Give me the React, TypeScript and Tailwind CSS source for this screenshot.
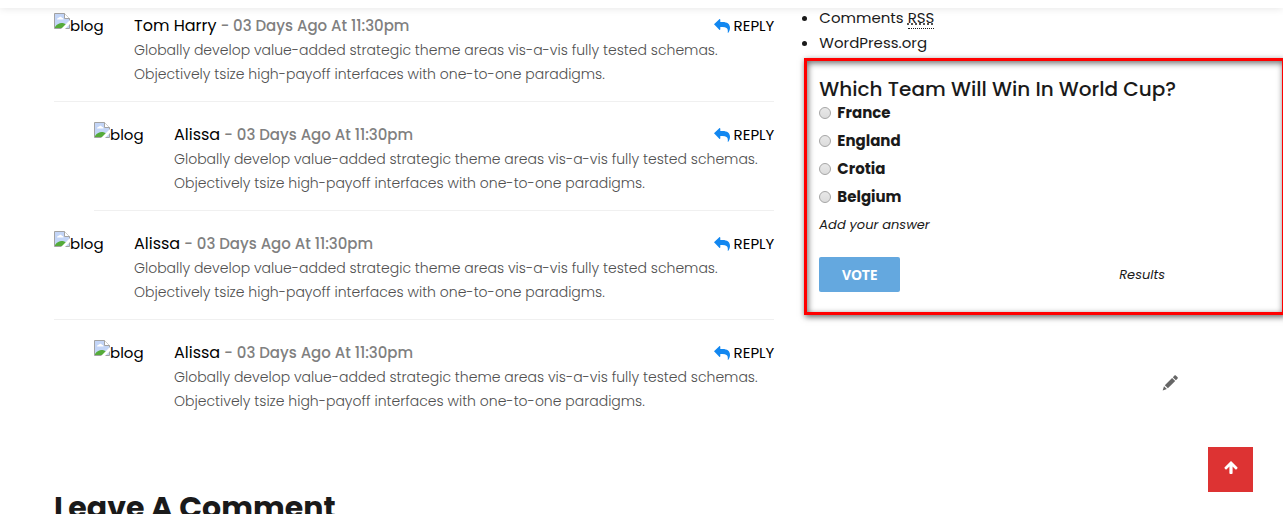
import React from 'react';

const comments = [
    {id: 1, name: 'Tom Harry', nested: false},
    {id: 2, name: 'Alissa', nested: true},
    {id: 3, name: 'Alissa', nested: false},
    {id: 4, name: 'Alissa', nested: true},
];

const answers = ['France', 'England', 'Crotia', 'Belgium'];

const ReplyIcon: React.FC = () => (
    <svg viewBox="0 0 16 14" className="h-[14px] w-4 text-[#1287f0]" fill="currentColor" aria-hidden="true">
        <path d="M0 5.200 5.300.300c.4-.4 1-.2 1 .4v2.300h2.200c4.800 0 7.500 2 7.500 6 0 1.800-.7 3.500-1.700 4.700-.3.300-.7.200-.6-.3.700-3.700-1-5.300-5.200-5.300H6.300v2.100c0 .6-.6.900-1 .5z"/>
    </svg>
);

const PencilIcon: React.FC = () => (
    <svg viewBox="0 0 16 16" className="h-4 w-4" fill="currentColor" aria-hidden="true">
        <path d="m12.300.7-1.500 1.500 3.100 3.100 1.500-1.500c.6-.6.6-1.100 0-1.700L14 .7c-.6-.6-1.100-.6-1.700 0z"/>
        <path d="m10.100 2.900-7.300 7.300 3.100 3.100 7.300-7.300z"/>
        <path d="M2 11.300.700 15.400l4.200-1.300z"/>
    </svg>
);

const ArrowUpIcon: React.FC = () => (
    <svg viewBox="0 0 14 13" className="h-[13px] w-[14px]" fill="currentColor" aria-hidden="true">
        <path d="M7 0 .700 6.300c-.4.400-.4.800 0 1.200l.7.700c.4.400.9.400 1.300 0L5.400 5.600V12c0 .6.300.9.800.9h1.600c.5 0 .8-.3.800-.9V5.600l2.700 2.600c.4.400.9.400 1.300 0l.7-.7c.4-.4.400-.8 0-1.200z"/>
    </svg>
);

const Avatar: React.FC = () => (
    <div className="flex w-20 shrink-0 items-start text-[15px] leading-[25px] text-black">
        <svg viewBox="0 0 16 16" className="h-4 w-4 shrink-0" aria-hidden="true">
            <path d="M.5.5h10l5 5v10H.5z" fill="#c3d5f7"/>
            <path d="M3 6.500c0-1.300 1-1.800 2-1.800.5-1.200 2.500-1.200 3 .3C9 5 9.500 5.500 9.500 6.500z" fill="#fff"/>
            <path d="M1 14c2-3 4.500-4 6.500-4 2 0 3.500.5 5 2L9 15H1z" fill="#55ab3a"/>
            <path d="M.5.5h10l5 5v10H.5z" fill="none" stroke="#a3a3a3"/>
            <path d="M10.500.5v5h5" fill="#fff" stroke="#a3a3a3"/>
            <path d="M16 7 7 16h4l5-5z" fill="#fff"/>
        </svg>
        <span>blog</span>
    </div>
);

const App: React.FC = () => {
    return (
        <div className="h-screen overflow-hidden bg-white font-['Poppins','Inter',sans-serif] text-[#1a1a1a]">
            {/* Sticky header edge */}
            <header className="fixed inset-x-0 top-0 z-10 h-2 bg-white shadow-[0_0_8px_rgba(0,0,0,0.12)]"/>

            <div className="grid grid-cols-[minmax(0,301fr)_minmax(0,200fr)] gap-[30px] pl-[54px]">
                <main className="pt-[13px]">
                    <ul>
                        {comments.map((comment, index) => (
                            <li
                                key={comment.id}
                                className={`mb-5 flex pb-[15px] ${comment.nested ? 'ml-10' : ''} ${
                                    index < comments.length - 1 ? 'border-b border-[#f0f0f0]' : ''
                                }`}
                            >
                                <Avatar/>
                                <div className="min-w-0 flex-1">
                                    <div className="flex items-center justify-between leading-[25px]">
                                        <h4 className="text-[15px] font-medium text-[#808080]">
                                            <span className="text-base font-normal text-black">{comment.name}</span>
                                            {' - 03 Days Ago At 11:30pm'}
                                        </h4>
                                        <a href="#reply" className="flex items-center gap-1 text-[15px] leading-[25px] text-black">
                                            <ReplyIcon/>
                                            REPLY
                                        </a>
                                    </div>
                                    <p className="text-sm leading-6 font-light whitespace-nowrap text-[#505050]">
                                        Globally develop value-added strategic theme areas vis-a-vis fully tested schemas.
                                        <br/>
                                        Objectively tsize high-payoff interfaces with one-to-one paradigms.
                                    </p>
                                </div>
                            </li>
                        ))}
                    </ul>
                    <h2 className="pt-[42px] text-[30px] leading-9 font-bold">Leave A Comment</h2>
                </main>

                <aside className="pt-[5px]">
                    <ul className="list-disc pl-[15px] text-[15px] leading-[25px]">
                        <li>
                            <a href="#comments">
                                Comments{' '}
                                <abbr
                                    title="Really Simple Syndication"
                                    className="border-b border-dotted border-[#1a1a1a] underline decoration-dotted"
                                >
                                    RSS
                                </abbr>
                            </a>
                        </li>
                        <li><a href="#wordpress">WordPress.org</a></li>
                    </ul>

                    <form
                        className="mt-[3px] -mr-[2px] border-[3px] border-[#ff0000] px-3 pt-[17px] pb-5 shadow-[1px_2px_6px_rgba(0,0,0,0.6),inset_1px_2px_6px_rgba(0,0,0,0.6)]"
                        onSubmit={(e) => e.preventDefault()}
                    >
                        <h3 className="text-xl leading-[23px] font-medium">Which Team Will Win In World Cup?</h3>
                        {answers.map((answer) => (
                            <label key={answer} className="mb-1 flex items-center gap-[6px] text-[15px] leading-6 font-bold">
                                <input
                                    type="radio"
                                    name="team"
                                    value={answer}
                                    className="h-3 w-3 appearance-none rounded-full border border-[#a5a5a5] bg-linear-to-b from-[#e8e8e8] to-[#dcdcdc] checked:bg-[#4a4a4a]"
                                />
                                {answer}
                            </label>
                        ))}
                        <a href="#answer" className="block text-[13px] leading-6 italic">Add your answer</a>
                        <div className="mt-5 flex items-center justify-between pr-[105px]">
                            <button
                                type="submit"
                                className="h-[35px] w-[81px] rounded-xs bg-[#64a8df] font-['Noto_Sans','Open_Sans',sans-serif] text-sm font-bold text-white"
                            >
                                VOTE
                            </button>
                            <a href="#results" className="text-[13px] leading-6 italic">Results</a>
                        </div>
                    </form>

                    <div className="mt-[60px] flex justify-end pr-[105px]">
                        <button type="button" aria-label="Edit" className="text-[#666]">
                            <PencilIcon/>
                        </button>
                    </div>
                </aside>
            </div>

            <a
                href="#top"
                aria-label="Back to top"
                className="fixed right-[30px] bottom-[22px] flex h-[45px] w-[45px] items-center justify-center bg-[#dd3333] pb-1 text-white"
            >
                <ArrowUpIcon/>
            </a>
        </div>
    );
};

export default App;
